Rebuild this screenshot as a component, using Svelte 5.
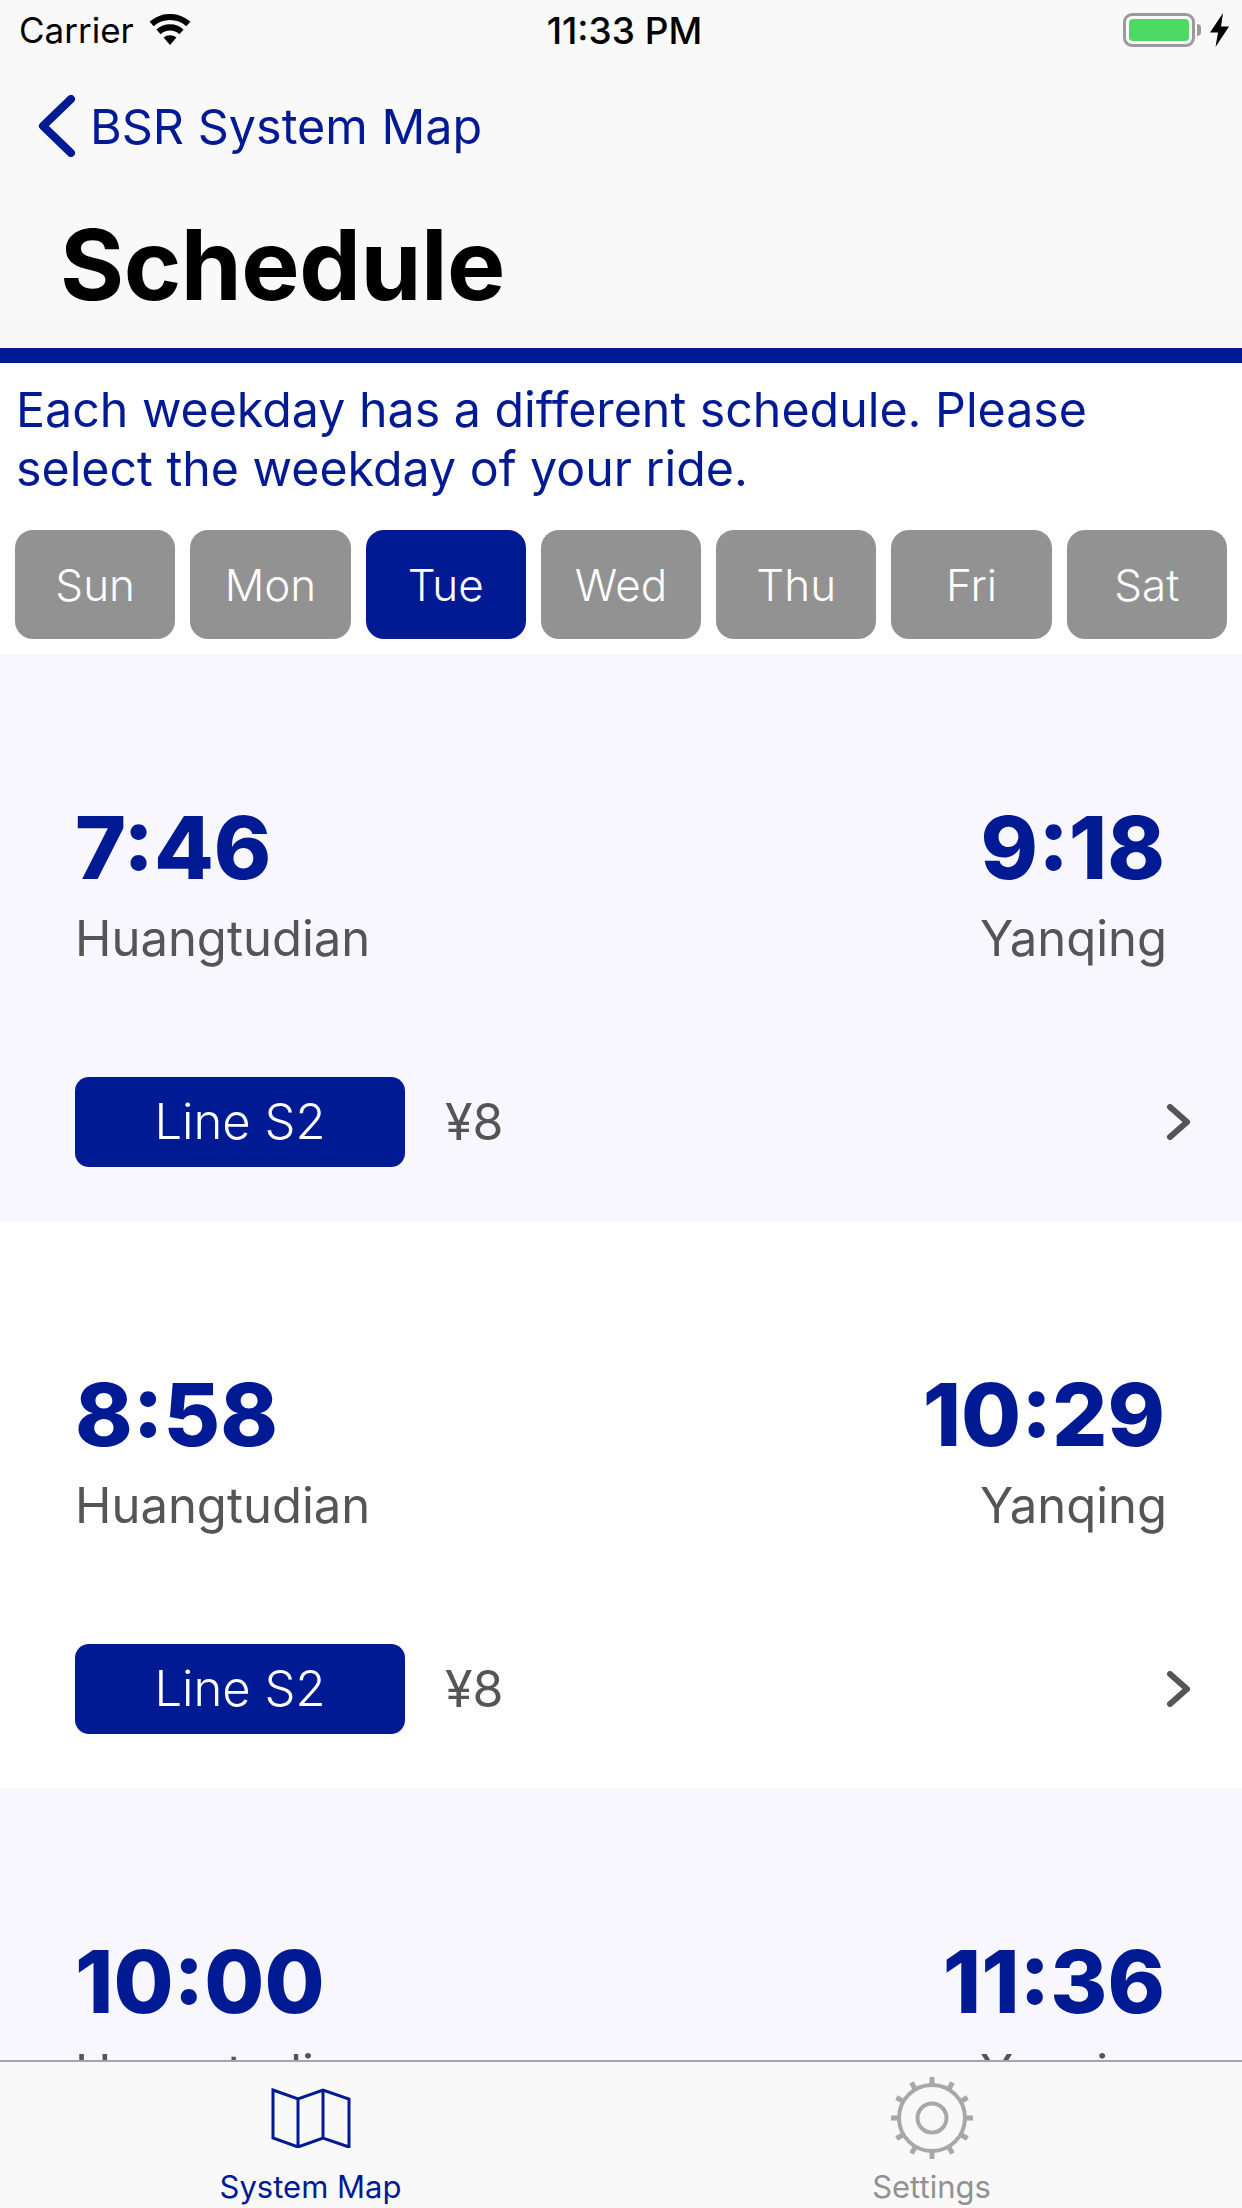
<script>
	const days = ['Sun', 'Mon', 'Tue', 'Wed', 'Thu', 'Fri', 'Sat'];
	let selected = $state('Tue');

	const trips = [
		{ depart: '7:46', arrive: '9:18' },
		{ depart: '8:58', arrive: '10:29' },
		{ depart: '10:00', arrive: '11:36' }
	];

	const teeth = Array.from({ length: 12 }, (_, i) => i * 30);
</script>

<div class="page">
	<header class="top">
		<div class="status">
			<div class="status-left">
				<span>Carrier</span>
				<svg class="wifi" viewBox="0 0 42 32" width="42" height="32">
					<path d="M21 31 14.6 23.6a9.6 9.6 0 0 1 12.8 0Z" />
					<path d="M11.6 20.2 7.4 15.4a20.4 20.4 0 0 1 27.2 0l-4.2 4.8a14 14 0 0 0-18.8 0Z" />
					<path d="M4.6 12.2 0.6 7.6a31 31 0 0 1 40.8 0l-4 4.6a25 25 0 0 0-32.8 0Z" />
				</svg>
			</div>
			<span class="clock">11:33 PM</span>
			<div class="status-right">
				<div class="battery"><div class="charge"></div></div>
				<div class="nub"></div>
				<svg class="bolt" viewBox="0 0 20 34" width="20" height="34">
					<path d="M13 0 0 19.500h8L5.500 34 19 13.500h-8Z" />
				</svg>
			</div>
		</div>
		<div class="back">
			<svg viewBox="0 0 38 62" width="38" height="62">
				<path d="M33 4 5 31l28 27" />
			</svg>
			<span>BSR System Map</span>
		</div>
		<h1>Schedule</h1>
	</header>

	<p class="intro">Each weekday has a different schedule. Please select the weekday of your ride.</p>

	<div class="days">
		{#each days as day}
			<button class="day" class:active={day === selected} onclick={() => (selected = day)}>{day}</button>
		{/each}
	</div>

	<div class="list">
		{#each trips as trip}
			<div class="trip">
				<div class="times">
					<div>
						<div class="time">{trip.depart}</div>
						<div class="station">Huangtudian</div>
					</div>
					<div class="end">
						<div class="time">{trip.arrive}</div>
						<div class="station">Yanqing</div>
					</div>
				</div>
				<div class="meta">
					<div class="line">Line S2</div>
					<div class="price">¥8</div>
					<svg class="chevron" viewBox="0 0 26 36" width="26" height="36">
						<path d="M4 3l17 15L4 33" />
					</svg>
				</div>
			</div>
		{/each}
	</div>

	<nav class="tabs">
		<div class="tab current">
			<svg viewBox="0 0 80 60" width="80" height="60">
				<path d="M2 2 27 11 52 2 78 11V59L52 50 27 59 2 50Z M27 11V59 M52 2V50" />
			</svg>
			<span>System Map</span>
		</div>
		<div class="tab">
			<svg viewBox="0 0 84 84" width="84" height="84">
				<circle cx="42" cy="42" r="33" />
				<circle cx="42" cy="42" r="14.500" />
				{#each teeth as angle}
					<rect x="39.500" y="1" width="5" height="8" transform="rotate({angle} 42 42)" />
				{/each}
			</svg>
			<span>Settings</span>
		</div>
	</nav>
</div>

<style>
	:global(body) {
		margin: 0;
		background: #ffffff;
	}

	.page {
		width: 1242px;
		height: 2208px;
		display: flex;
		flex-direction: column;
		overflow: hidden;
		font-family: Inter, "Liberation Sans", sans-serif;
	}

	.top {
		height: 348px;
		flex: none;
		border-bottom: 15px solid #001a94;
		background: linear-gradient(#f9f9f9 85%, #f6f6f6);
	}

	.status {
		height: 60px;
		display: grid;
		grid-template-columns: 1fr auto 1fr;
		align-items: center;
		padding: 0 12px 0 19px;
		font-size: 35px;
		color: #000000;
	}

	.status-left {
		display: flex;
		align-items: center;
		gap: 15px;
	}

	.clock {
		font-size: 37px;
		font-weight: 500;
	}

	.status-right {
		display: flex;
		align-items: center;
		justify-content: flex-end;
	}

	.battery {
		width: 72px;
		height: 34px;
		box-sizing: border-box;
		border: 3px solid #9a9a9a;
		border-radius: 9px;
		padding: 3px;
	}

	.charge {
		height: 100%;
		background: #4cd964;
		border-radius: 4px;
	}

	.nub {
		width: 4px;
		height: 12px;
		margin-left: 2px;
		background: #9a9a9a;
		border-radius: 0 4px 4px 0;
	}

	.bolt {
		margin-left: 9px;
	}

	.back {
		height: 70px;
		margin-top: 31px;
		padding-left: 38px;
		display: flex;
		align-items: center;
		gap: 14px;
		font-size: 48.5px;
		color: #001a94;
	}

	.back svg {
		fill: none;
		stroke: #001a94;
		stroke-width: 8;
		stroke-linecap: round;
		stroke-linejoin: round;
	}

	h1 {
		margin: 49px 0 0 60px;
		font-size: 98px;
		line-height: 110px;
		font-weight: 700;
		letter-spacing: -0.5px;
		color: #000000;
	}

	.intro {
		margin: 17px 0 0;
		padding: 0 16px;
		font-size: 48.3px;
		line-height: 59px;
		color: #001a94;
	}

	.days {
		display: flex;
		gap: 15px;
		padding: 32px 15px 15px;
		flex: none;
	}

	.day {
		flex: 1;
		height: 109px;
		padding: 0;
		border: none;
		border-radius: 18px;
		background: #929292;
		color: #ffffff;
		font-family: inherit;
		font-size: 44px;
		font-weight: 300;
	}

	.day.active {
		background: #001a94;
	}

	.list {
		flex: 1;
		min-height: 0;
		overflow: hidden;
	}

	.trip {
		height: 567px;
		box-sizing: border-box;
		padding: 144px 50px 0 75px;
	}

	.trip:nth-child(odd) {
		background: #f7f7fd;
	}

	.times {
		display: flex;
		justify-content: space-between;
		padding-right: 27px;
	}

	.end {
		text-align: right;
	}

	.end .station {
		margin-right: -2px;
	}

	.time {
		font-size: 87px;
		line-height: 100px;
		font-weight: 800;
		color: #001a94;
	}

	.station {
		margin-top: 11px;
		font-size: 49px;
		line-height: 60px;
		color: #555555;
	}

	.meta {
		margin-top: 108px;
		display: flex;
		align-items: center;
	}

	.line {
		width: 330px;
		height: 90px;
		line-height: 90px;
		border-radius: 14px;
		background: #001a94;
		color: #ffffff;
		text-align: center;
		font-size: 49px;
		font-weight: 350;
	}

	.price {
		margin-left: 40px;
		font-size: 50px;
		color: #555555;
	}

	.chevron {
		margin-left: auto;
		fill: none;
		stroke: #555555;
		stroke-width: 6;
		stroke-linecap: round;
		stroke-linejoin: round;
	}

	.tabs {
		height: 146px;
		flex: none;
		display: flex;
		border-top: 2px solid #a5a5aa;
		background: #f9f9f9;
	}

	.tab {
		flex: 1;
		position: relative;
		display: flex;
		flex-direction: column;
		align-items: center;
		justify-content: flex-end;
		padding-bottom: 1px;
		font-size: 31px;
		line-height: 40px;
		color: #929292;
	}

	.tab svg {
		position: absolute;
		top: 14px;
		fill: none;
		stroke: #a8a8a8;
		stroke-width: 4;
	}

	.tab svg rect {
		fill: #a8a8a8;
		stroke: none;
	}

	.tab.current {
		color: #001a94;
	}

	.tab.current svg {
		top: 26px;
		stroke: #001a94;
		stroke-width: 3;
	}
</style>
